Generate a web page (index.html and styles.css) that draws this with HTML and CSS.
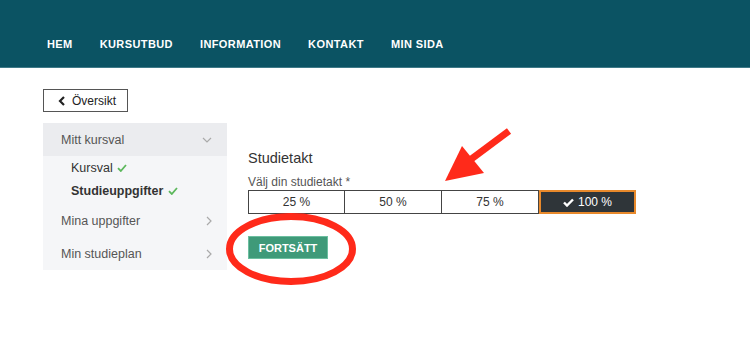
FILE: index.html
```html
<!DOCTYPE html>
<html lang="sv">
<head>
    <meta charset="UTF-8">
    <meta name="viewport" content="width=device-width, initial-scale=1.0">
    <title>Studieuppgifter</title>
    <link rel="stylesheet" href="styles.css">
</head>
<body>
    <header class="topbar">
        <nav class="nav">
            <a href="#">HEM</a>
            <a href="#">KURSUTBUD</a>
            <a href="#">INFORMATION</a>
            <a href="#">KONTAKT</a>
            <a href="#">MIN SIDA</a>
        </nav>
    </header>

    <div class="page">
        <button class="back-button">
            <svg width="8" height="10" viewBox="0 0 8 10"><path d="M6 1 L2 5 L6 9" fill="none" stroke="#222" stroke-width="2.2"/></svg>
            Översikt
        </button>

        <div class="layout">
            <aside class="sidebar">
                <div class="side-row active">
                    <span>Mitt kursval</span>
                    <svg class="chev" width="10" height="6" viewBox="0 0 10 6"><path d="M1 1 L5 5 L9 1" fill="none" stroke="#aaa" stroke-width="1.2"/></svg>
                </div>
                <ul class="sub-list">
                    <li>Kursval <svg class="tick" width="10" height="8" viewBox="0 0 10 8"><path d="M1 4.2 L3.8 7 L9 1" fill="none" stroke="#5cb85c" stroke-width="1.8"/></svg></li>
                    <li class="current">Studieuppgifter <svg class="tick" width="10" height="8" viewBox="0 0 10 8"><path d="M1 4.2 L3.8 7 L9 1" fill="none" stroke="#5cb85c" stroke-width="1.8"/></svg></li>
                </ul>
                <div class="side-row">
                    <span>Mina uppgifter</span>
                    <svg class="chev" width="6" height="10" viewBox="0 0 6 10"><path d="M1 1 L5 5 L1 9" fill="none" stroke="#aaa" stroke-width="1.2"/></svg>
                </div>
                <div class="side-row">
                    <span>Min studieplan</span>
                    <svg class="chev" width="6" height="10" viewBox="0 0 6 10"><path d="M1 1 L5 5 L1 9" fill="none" stroke="#aaa" stroke-width="1.2"/></svg>
                </div>
            </aside>

            <main class="content">
                <h2>Studietakt</h2>
                <label class="field-label">Välj din studietakt *</label>
                <div class="pace-group">
                    <button class="pace">25 %</button>
                    <button class="pace">50 %</button>
                    <button class="pace">75 %</button>
                    <button class="pace selected">
                        <svg width="11" height="9" viewBox="0 0 11 9"><path d="M1 4.5 L4 7.5 L10 1.5" fill="none" stroke="#fff" stroke-width="2.4"/></svg>
                        100 %
                    </button>
                </div>
                <button class="continue">FORTSÄTT</button>
            </main>
        </div>
    </div>

    <svg class="annotations" width="750" height="362" viewBox="0 0 750 362">
        <ellipse cx="291" cy="249" rx="61.5" ry="32.5" fill="none" stroke="#ff2a1a" stroke-width="7"/>
        <line x1="509" y1="131" x2="470" y2="160" stroke="#ff2a1a" stroke-width="7"/>
        <polygon points="462,146 445,181 484,173" fill="#ff2a1a"/>
    </svg>
</body>
</html>
```

FILE: styles.css
```css
body {
    margin: 0;
    font-family: "Liberation Sans", Arial, sans-serif;
    color: #333;
    background: #fff;
    position: relative;
}
.topbar {
    background: #0b5363;
    height: 67px;
    border-bottom: 1px solid #3f7a88;
    display: flex;
    align-items: flex-end;
}
.nav {
    display: flex;
    gap: 27px;
    padding: 0 0 16px 47px;
}
.nav a {
    color: #fff;
    text-decoration: none;
    font-size: 11px;
    font-weight: bold;
    letter-spacing: 0.4px;
    line-height: 13px;
}
.page {
    padding: 21px 43px;
}
.back-button {
    display: flex;
    align-items: center;
    gap: 6px;
    width: 85px;
    height: 23px;
    padding: 0 0 0 14px;
    border: 1px solid #555;
    background: #fff;
    font-family: inherit;
    font-size: 12px;
    color: #222;
}
.layout {
    display: flex;
    margin-top: 11px;
}
.sidebar {
    width: 184px;
    background: #f5f6f8;
    font-size: 12.5px;
    color: #555;
}
.side-row {
    height: 33px;
    display: flex;
    align-items: center;
    justify-content: space-between;
    padding: 0 15px 0 18px;
}
.side-row.active {
    background: #ebecef;
}
.sub-list {
    list-style: none;
    margin: 0;
    padding: 1px 0 0 28px;
    height: 47px;
}
.sub-list li {
    line-height: 23px;
    color: #333;
}
.sub-list li.current {
    font-weight: bold;
}
.tick {
    margin-left: 1px;
}
.content {
    padding: 26px 0 0 21px;
}
.content h2 {
    margin: 0;
    font-size: 14.5px;
    font-weight: normal;
    line-height: 18px;
    color: #333;
}
.field-label {
    display: block;
    margin-top: 8px;
    font-size: 12px;
    line-height: 14px;
    color: #555;
}
.pace-group {
    display: grid;
    grid-template-columns: repeat(4, 97px);
    width: 387px;
    margin-top: 1px;
}
.pace {
    height: 24px;
    border: 1px solid #444;
    border-left: none;
    background: #fff;
    font-family: inherit;
    font-size: 12px;
    color: #333;
}
.pace:first-child {
    border-left: 1px solid #444;
}
.pace.selected {
    background: #2f3539;
    border: 2px solid #e8892b;
    color: #fff;
    display: flex;
    align-items: center;
    justify-content: center;
    gap: 4px;
}
.continue {
    display: block;
    margin-top: 22px;
    width: 80px;
    height: 23px;
    background: #3f9a79;
    border: 1px solid #6cbfa0;
    color: #fff;
    font-family: inherit;
    font-size: 11px;
    font-weight: bold;
}
.annotations {
    position: absolute;
    top: 0;
    left: 0;
    pointer-events: none;
}
```
